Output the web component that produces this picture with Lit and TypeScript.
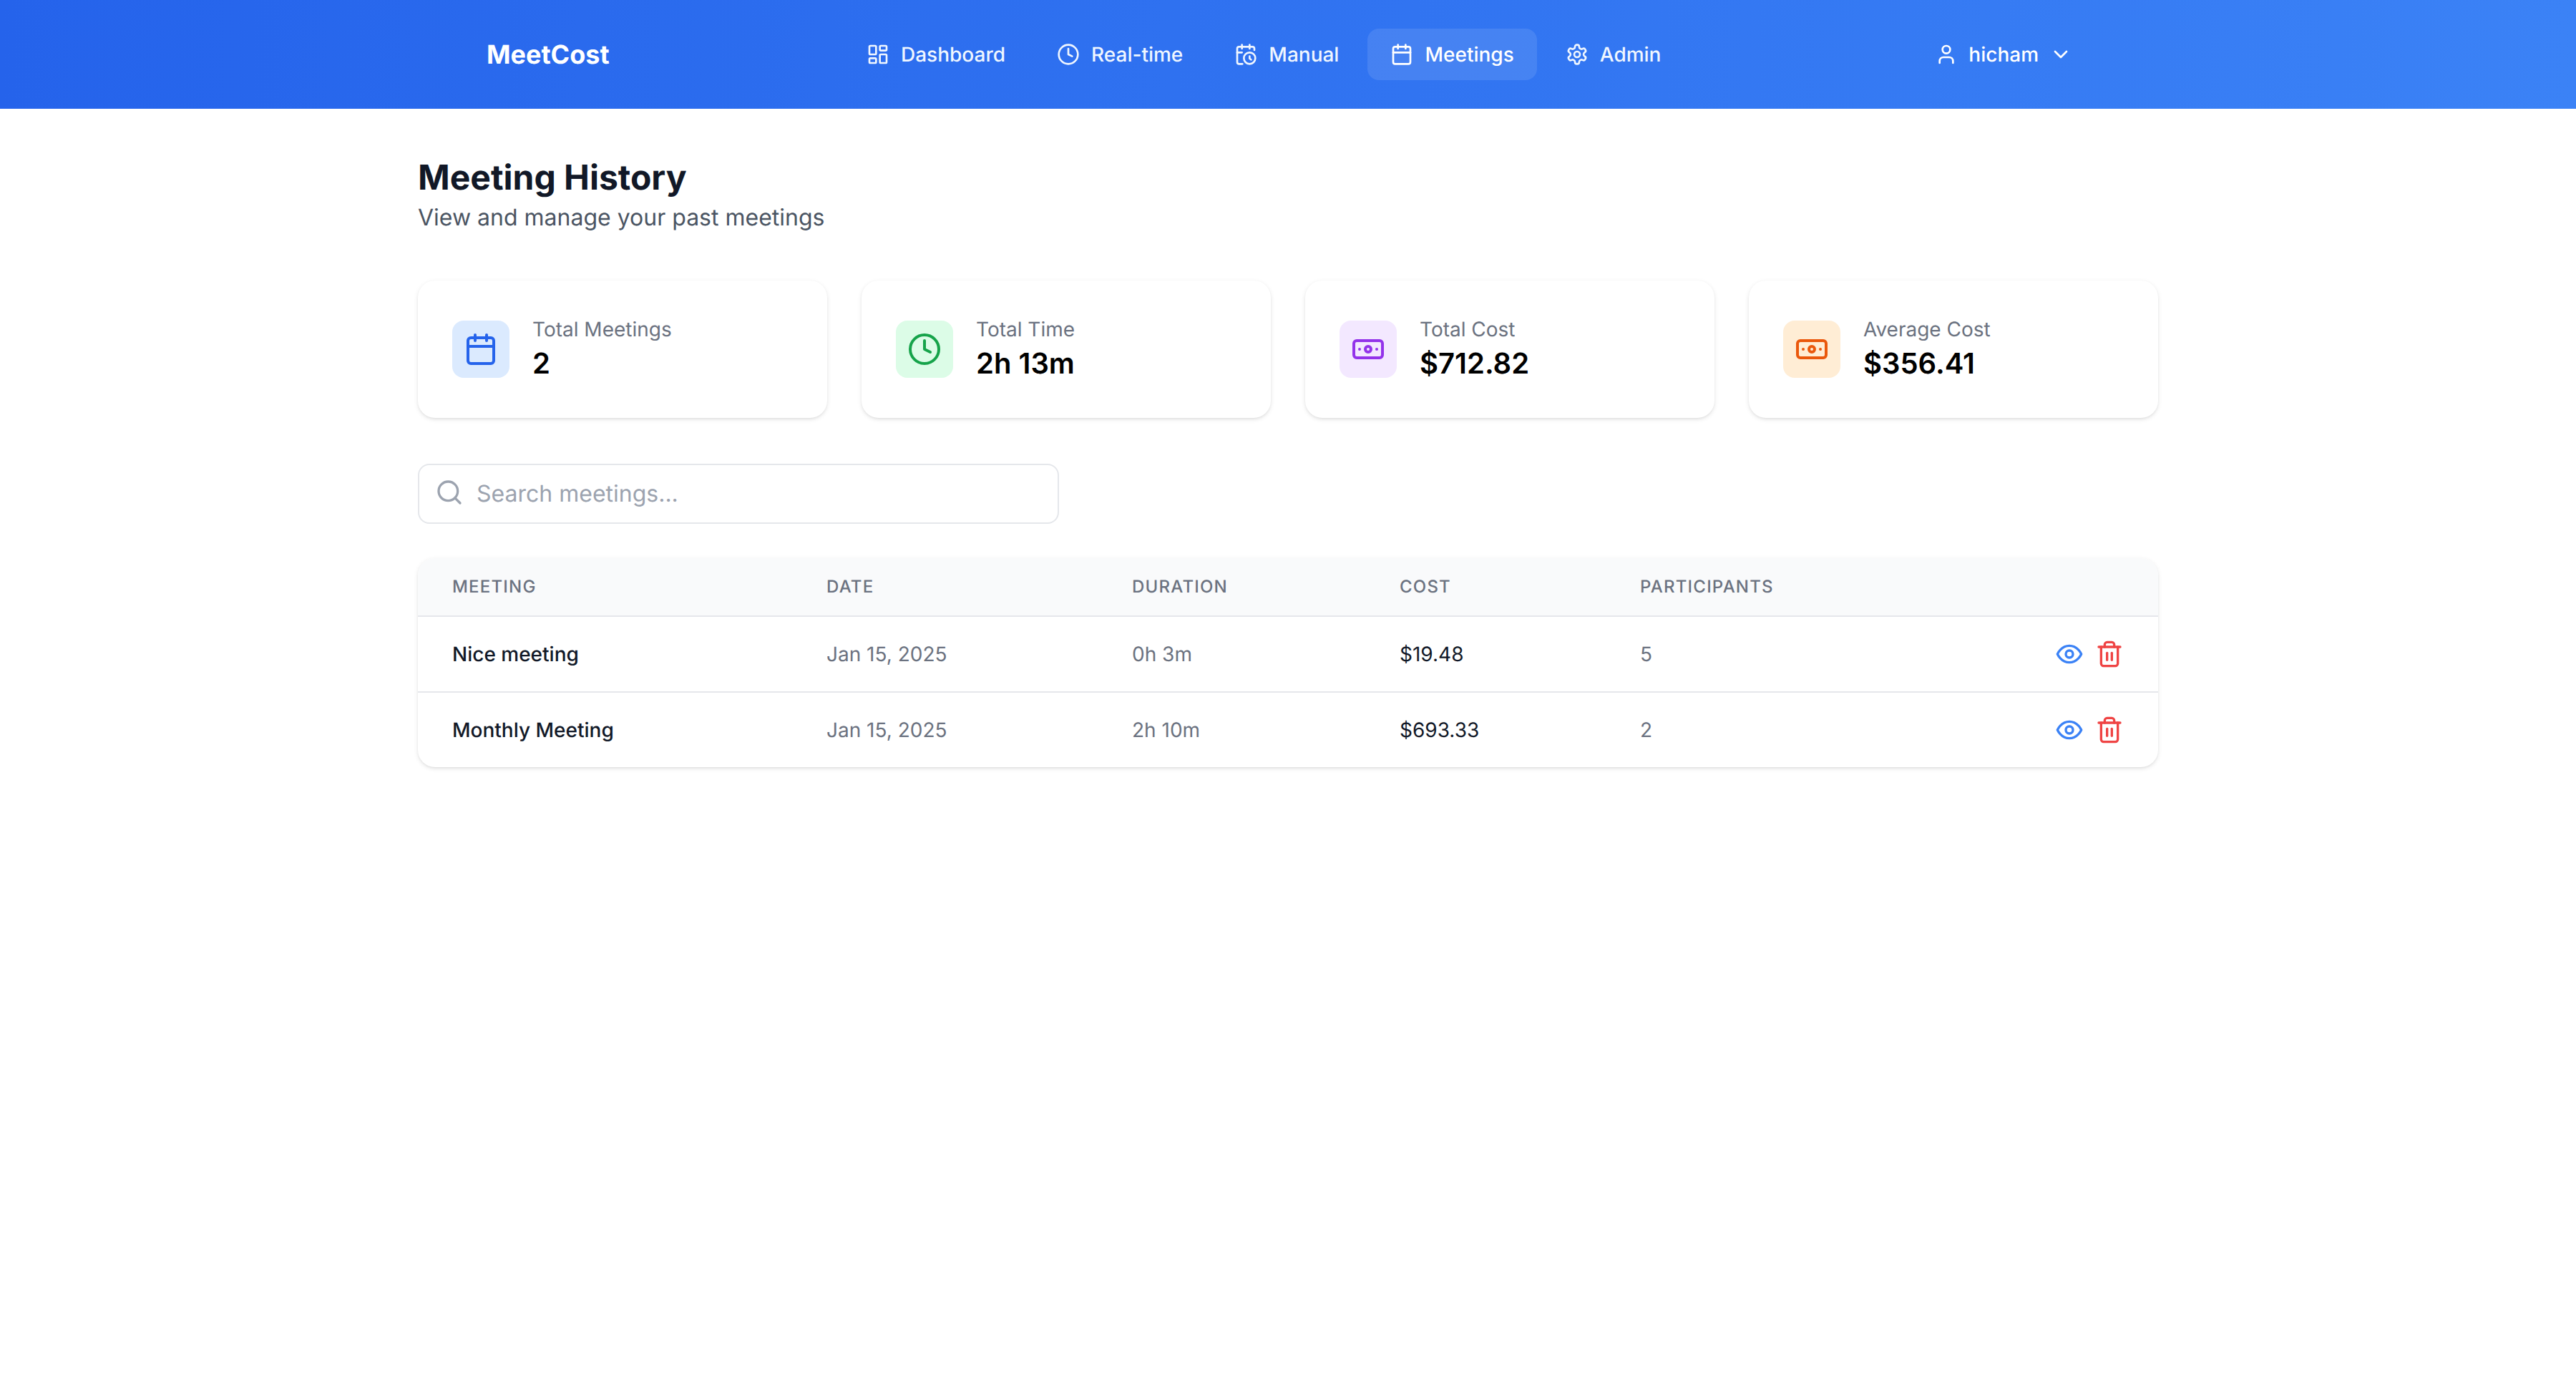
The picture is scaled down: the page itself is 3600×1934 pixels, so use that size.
import { LitElement, html, css, svg } from "lit";
import { customElement } from "lit/decorators.js";

const icon = (body: unknown, cls = "") => html`<svg class="icon ${cls}" viewBox="0 0 24 24" fill="none" stroke="currentColor" stroke-width="2" stroke-linecap="round" stroke-linejoin="round">${body}</svg>`;

const I = {
  dashboard: svg`<rect x="3" y="3" width="7" height="9" rx="1"/><rect x="14" y="3" width="7" height="5" rx="1"/><rect x="14" y="12" width="7" height="9" rx="1"/><rect x="3" y="16" width="7" height="5" rx="1"/>`,
  clock: svg`<circle cx="12" cy="12" r="10"/><polyline points="12 6 12 12 16 14"/>`,
  calClock: svg`<path d="M21 7.5V6a2 2 0 0 0-2-2H5a2 2 0 0 0-2 2v14a2 2 0 0 0 2 2h3.5"/><path d="M16 2v4"/><path d="M8 2v4"/><path d="M3 10h5"/><path d="M17.5 17.5 16 16.3V14"/><circle cx="16" cy="16" r="6"/>`,
  calendar: svg`<rect x="3" y="4" width="18" height="18" rx="2"/><line x1="16" y1="2" x2="16" y2="6"/><line x1="8" y1="2" x2="8" y2="6"/><line x1="3" y1="10" x2="21" y2="10"/>`,
  settings: svg`<path d="M12.22 2h-.44a2 2 0 0 0-2 2v.18a2 2 0 0 1-1 1.73l-.43.25a2 2 0 0 1-2 0l-.15-.08a2 2 0 0 0-2.73.73l-.22.38a2 2 0 0 0 .73 2.73l.15.1a2 2 0 0 1 1 1.72v.51a2 2 0 0 1-1 1.74l-.15.09a2 2 0 0 0-.73 2.73l.22.38a2 2 0 0 0 2.73.73l.15-.08a2 2 0 0 1 2 0l.43.25a2 2 0 0 1 1 1.73V20a2 2 0 0 0 2 2h.44a2 2 0 0 0 2-2v-.18a2 2 0 0 1 1-1.73l.43-.25a2 2 0 0 1 2 0l.15.08a2 2 0 0 0 2.73-.73l.22-.39a2 2 0 0 0-.73-2.73l-.15-.08a2 2 0 0 1-1-1.74v-.5a2 2 0 0 1 1-1.74l.15-.09a2 2 0 0 0 .73-2.73l-.22-.38a2 2 0 0 0-2.73-.73l-.15.08a2 2 0 0 1-2 0l-.43-.25a2 2 0 0 1-1-1.73V4a2 2 0 0 0-2-2z"/><circle cx="12" cy="12" r="3"/>`,
  user: svg`<path d="M19 21v-2a4 4 0 0 0-4-4H9a4 4 0 0 0-4 4v2"/><circle cx="12" cy="7" r="4"/>`,
  chevron: svg`<path d="m6 9 6 6 6-6"/>`,
  banknote: svg`<rect x="2" y="6" width="20" height="12" rx="2"/><circle cx="12" cy="12" r="2"/><path d="M6 12h.01M18 12h.01"/>`,
  search: svg`<circle cx="11" cy="11" r="8"/><path d="m21 21-4.3-4.3"/>`,
  eye: svg`<path d="M2 12s3-7 10-7 10 7 10 7-3 7-10 7-10-7-10-7Z"/><circle cx="12" cy="12" r="3"/>`,
  trash: svg`<path d="M3 6h18"/><path d="M19 6v14c0 1-1 2-2 2H7c-1 0-2-1-2-2V6"/><path d="M8 6V4c0-1 1-2 2-2h4c1 0 2 1 2 2v2"/><line x1="10" y1="11" x2="10" y2="17"/><line x1="14" y1="11" x2="14" y2="17"/>`,
};

const NAV = [
  { label: "Dashboard", icon: I.dashboard },
  { label: "Real-time", icon: I.clock },
  { label: "Manual", icon: I.calClock },
  { label: "Meetings", icon: I.calendar, active: true },
  { label: "Admin", icon: I.settings },
];

const STATS = [
  { label: "Total Meetings", value: "2", icon: I.calendar, tone: "blue" },
  { label: "Total Time", value: "2h 13m", icon: I.clock, tone: "green" },
  { label: "Total Cost", value: "$712.82", icon: I.banknote, tone: "purple" },
  { label: "Average Cost", value: "$356.41", icon: I.banknote, tone: "orange" },
];

const ROWS = [
  { name: "Nice meeting", date: "Jan 15, 2025", duration: "0h 3m", cost: "$19.48", people: "5" },
  { name: "Monthly Meeting", date: "Jan 15, 2025", duration: "2h 10m", cost: "$693.33", people: "2" },
];

@customElement("app-root")
export class AppRoot extends LitElement {
  static styles = css`
    :host { display: block; min-height: 1934px; background: #fff; font-family: Inter, "Liberation Sans", sans-serif; color: #111827; text-rendering: geometricPrecision; }
    * { box-sizing: border-box; }
    .icon { display: block; flex: none; width: 32px; height: 32px; }
    header { display: flex; align-items: center; height: 152px; padding: 0 672px 0 680px; background: linear-gradient(90deg, #2563eb, #3b82f6); color: #fff; }
    .logo { font-size: 36px; line-height: 56px; font-weight: 700; width: 499px; flex: none; }
    nav { display: flex; gap: 8px; }
    .nav-item { display: flex; align-items: center; gap: 16px; height: 72px; padding: 0 32px; border-radius: 16px; font-size: 28px; font-weight: 500; color: #eff6ff; }
    .nav-item.active { background: rgba(255, 255, 255, 0.1); color: #fff; }
    .user { display: flex; align-items: center; gap: 15px; margin-left: auto; padding: 0 32px; font-size: 28px; font-weight: 500; }
    main { width: 2432px; margin: 0 auto; padding-top: 64px; }
    h1 { margin: 0; font-size: 48px; line-height: 64px; font-weight: 700; color: #111827; }
    .sub { margin: 0 0 64px; font-size: 32px; line-height: 48px; color: #4b5563; }
    .stats { display: grid; grid-template-columns: repeat(4, 1fr); gap: 48px; margin-bottom: 64px; }
    .card { display: flex; align-items: center; gap: 32px; padding: 48px; background: #fff; border-radius: 24px; box-shadow: 0 2px 6px rgba(0, 0, 0, 0.1), 0 2px 4px -2px rgba(0, 0, 0, 0.1); }
    .badge { display: flex; align-items: center; justify-content: center; width: 80px; height: 80px; border-radius: 16px; }
    .badge .icon { width: 48px; height: 48px; }
    .blue { background: #dbeafe; color: #2563eb; }
    .green { background: #dcfce7; color: #16a34a; }
    .purple { background: #f3e8ff; color: #9333ea; }
    .orange { background: #ffedd5; color: #ea580c; }
    .stat-label { font-size: 28px; line-height: 40px; color: #6b7280; }
    .stat-value { font-size: 40px; line-height: 56px; font-weight: 600; color: #000; }
    .search { display: flex; align-items: center; gap: 18px; width: 896px; height: 84px; padding: 0 22px; margin-bottom: 48px; border: 2px solid #e5e7eb; border-radius: 16px; color: #9ca3af; }
    .search .icon { width: 40px; height: 40px; margin-bottom: 4px; }
    .search input { flex: 1; min-width: 0; border: 0; outline: 0; padding: 0; background: none; font: 400 32px/48px Inter, "Liberation Sans", sans-serif; color: #111827; text-rendering: geometricPrecision; }
    .search input::placeholder { color: #9ca3af; opacity: 1; }
    .table-wrap { border-radius: 24px; overflow: hidden; background: #fff; box-shadow: 0 2px 6px rgba(0, 0, 0, 0.1), 0 2px 4px -2px rgba(0, 0, 0, 0.1); }
    table { width: 100%; border-collapse: separate; border-spacing: 0; table-layout: fixed; }
    .c1 { width: 523px; } .c2 { width: 427px; } .c3 { width: 374px; } .c4 { width: 336px; }
    th { padding: 24px 48px; height: 82px; background: #f9fafb; border-bottom: 2px solid #e5e7eb; font-size: 24px; line-height: 32px; font-weight: 500; letter-spacing: 0.05em; text-transform: uppercase; text-align: left; color: #6b7280; }
    td { padding: 32px 48px; font-size: 28px; line-height: 40px; color: #6b7280; }
    tr:not(:last-child) td { border-bottom: 2px solid #e5e7eb; }
    .name { font-weight: 500; color: #111827; }
    .cost { color: #111827; }
    .actions { display: flex; justify-content: flex-end; gap: 16px; }
    .actions .icon { width: 40px; height: 40px; }
    .eye { color: #3b82f6; }
    .trash { color: #ef4444; }
  `;

  render() {
    return html`
      <header>
        <div class="logo">MeetCost</div>
        <nav>
          ${NAV.map((n) => html`<div class="nav-item ${n.active ? "active" : ""}">${icon(n.icon)}<span>${n.label}</span></div>`)}
        </nav>
        <div class="user">${icon(I.user)}<span>hicham</span>${icon(I.chevron)}</div>
      </header>
      <main>
        <h1>Meeting History</h1>
        <p class="sub">View and manage your past meetings</p>
        <section class="stats">
          ${STATS.map((s) => html`<div class="card">
            <div class="badge ${s.tone}">${icon(s.icon)}</div>
            <div><div class="stat-label">${s.label}</div><div class="stat-value">${s.value}</div></div>
          </div>`)}
        </section>
        <label class="search">${icon(I.search)}<input type="text" placeholder="Search meetings..." /></label>
        <div class="table-wrap">
          <table>
            <colgroup><col class="c1" /><col class="c2" /><col class="c3" /><col class="c4" /><col /><col /></colgroup>
            <thead><tr><th>Meeting</th><th>Date</th><th>Duration</th><th>Cost</th><th>Participants</th><th></th></tr></thead>
            <tbody>
              ${ROWS.map((r) => html`<tr>
                <td class="name">${r.name}</td><td>${r.date}</td><td>${r.duration}</td><td class="cost">${r.cost}</td><td>${r.people}</td>
                <td><div class="actions"><span class="eye">${icon(I.eye)}</span><span class="trash">${icon(I.trash)}</span></div></td>
              </tr>`)}
            </tbody>
          </table>
        </div>
      </main>
    `;
  }
}
